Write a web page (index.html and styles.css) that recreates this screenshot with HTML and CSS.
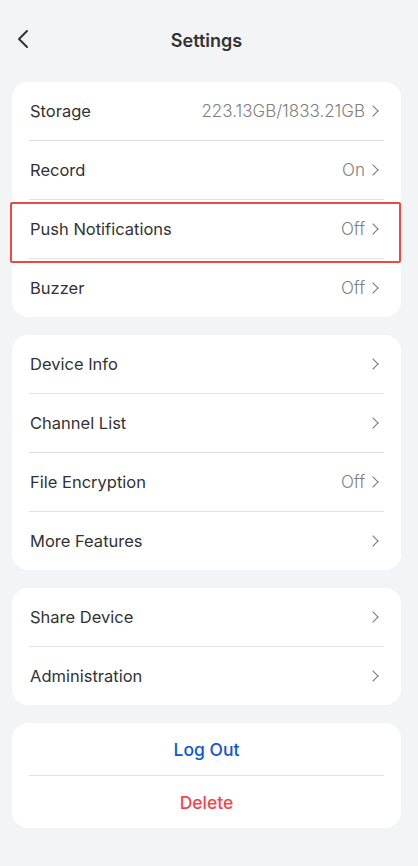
FILE: index.html
```html
<!DOCTYPE html>
<html lang="en">
<head>
  <meta charset="UTF-8">
  <title>Settings</title>
  <link rel="stylesheet" href="styles.css">
</head>
<body>

  <div class="header">
    <span class="back">
      <svg width="12" height="20" viewBox="0 0 12 20"><path d="M10 2 L2 10 L10 18" fill="none" stroke="#333" stroke-width="2" stroke-linecap="round" stroke-linejoin="round"/></svg>
    </span>
    <h1>Settings</h1>
  </div>

  <div class="card">
    <div class="row"><span class="label">Storage</span><span class="value">223.13GB/1833.21GB<i class="chev"></i></span></div>
    <div class="row"><span class="label">Record</span><span class="value">On<i class="chev"></i></span></div>
    <div class="row marked"><span class="label">Push Notifications</span><span class="value">Off<i class="chev"></i></span></div>
    <div class="row"><span class="label">Buzzer</span><span class="value">Off<i class="chev"></i></span></div>
  </div>

  <div class="card">
    <div class="row"><span class="label">Device Info</span><span class="value"><i class="chev"></i></span></div>
    <div class="row"><span class="label">Channel List</span><span class="value"><i class="chev"></i></span></div>
    <div class="row"><span class="label">File Encryption</span><span class="value">Off<i class="chev"></i></span></div>
    <div class="row"><span class="label">More Features</span><span class="value"><i class="chev"></i></span></div>
  </div>

  <div class="card">
    <div class="row"><span class="label">Share Device</span><span class="value"><i class="chev"></i></span></div>
    <div class="row"><span class="label">Administration</span><span class="value"><i class="chev"></i></span></div>
  </div>

  <div class="card">
    <div class="action logout">Log Out</div>
    <div class="action delete">Delete</div>
  </div>

</body>
</html>
```

FILE: styles.css
```css
body {
  margin: 0;
  padding: 0 17px 0 12px;
  background-color: #f3f4f6;
  font-family: Inter, "Noto Sans", sans-serif;
  color: #333;
}

.header {
  position: relative;
  height: 82px;
  display: flex;
  align-items: center;
  justify-content: center;
  padding-bottom: 2px;
  box-sizing: border-box;
}

.header h1 {
  margin: 0;
  font-size: 18px;
  font-weight: 600;
  color: #333;
}

.back {
  position: absolute;
  left: 5px;
  top: 29px;
}

.card {
  background-color: #fff;
  border-radius: 16px;
  padding: 0 17px;
  margin-bottom: 18px;
}

.row {
  height: 58px;
  display: flex;
  align-items: center;
  justify-content: space-between;
  border-bottom: 1px solid #e2e2e4;
  padding-left: 1px;
  font-size: 16.5px;
}

.row:last-child {
  border-bottom: none;
}

.marked {
  position: relative;
}

.marked::after {
  content: "";
  position: absolute;
  left: -19px;
  right: -17px;
  top: 2px;
  height: 57px;
  border: 2px solid #ea4a3f;
  border-radius: 2px;
}

.label {
  color: #333;
}

.value {
  color: #808080;
  font-size: 17px;
  font-weight: 300;
  display: flex;
  align-items: center;
  margin-right: 5px;
}

.chev {
  display: inline-block;
  width: 7px;
  height: 7px;
  border-top: 1.5px solid #777;
  border-right: 1.5px solid #777;
  transform: rotate(45deg);
  margin-left: 4px;
  margin-right: 2px;
}

.action {
  height: 52px;
  display: flex;
  align-items: center;
  justify-content: center;
  font-size: 17.5px;
  font-weight: 500;
}

.logout {
  color: #0f55d6;
  border-bottom: 1px solid #e2e2e4;
}

.delete {
  color: #f4454c;
}
```
